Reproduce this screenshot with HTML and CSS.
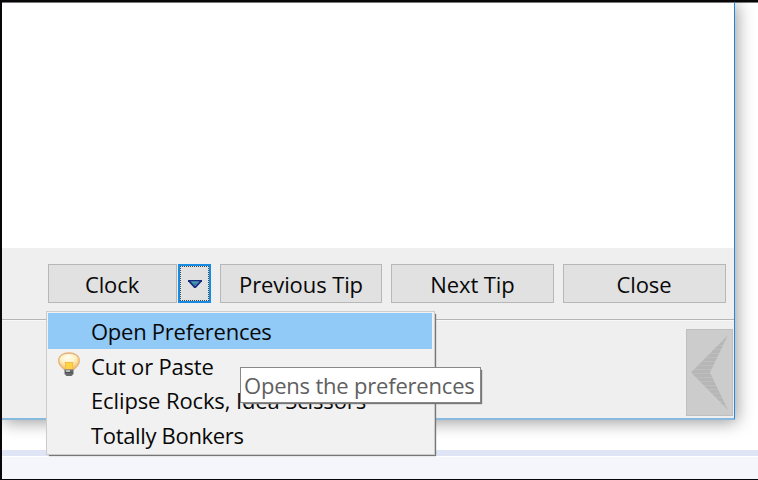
FILE: index.html
```html
<!DOCTYPE html>
<html lang="en">
<head>
<meta charset="utf-8">
<title>Tip of the Day</title>
<link rel="stylesheet" href="styles.css">
</head>
<body>
<main class="desktop">
  <section class="dialog">
    <div class="tip-area"></div>
    <div class="button-bar">
      <button class="button clock"><span>Clock</span></button>
      <button class="button dropdown" aria-label="More tips">
        <svg width="14" height="9" viewBox="0 0 14 9"><path d="M0 0H14V1.2L7.8 8H6.2L0 1.2Z" fill="#19297f"/><path d="M2.5 1.3H11.7L7 6.2Z" fill="#439bad"/><path d="M4.5 3.5H9.7L7 6.2Z" fill="#3478b5"/></svg>
      </button>
      <button class="button previous"><span>Previous Tip</span></button>
      <button class="button next"><span>Next Tip</span></button>
      <button class="button close"><span>Close</span></button>
    </div>
    <div class="footer">
      <div class="back">
        <svg width="47" height="87" viewBox="0 0 47 87">
          <defs><pattern id="lines" width="4" height="4" patternUnits="userSpaceOnUse"><path d="M0 0H4V4H0Z" fill="#b6b6b6"/><path d="M0 0H4V1H0Z" fill="#bebebe"/></pattern></defs>
          <path d="M42 6L5 43.500L42 81L24 43.500Z" fill="url(#lines)"/>
        </svg>
      </div>
    </div>
  </section>
  <div class="strip"></div>
  <nav class="menu">
    <div class="item selected"><span class="t1">Open Preferences</span></div>
    <div class="item">
      <svg class="bulb" width="24" height="26" viewBox="0 0 24 26">
        <defs><radialGradient id="glow" cx=".45" cy=".28" r=".65"><stop offset="0" stop-color="#fffef2"/><stop offset=".55" stop-color="#fff0c2"/><stop offset="1" stop-color="#f6c76e"/></radialGradient></defs>
        <path d="M7.500 17.500C6 15.500 1.700 14 1.700 8.500C1.700 4 6 1 12 1S22.300 4 22.300 8.500C22.300 14 18 15.500 16.500 17.500Z" fill="url(#glow)" stroke="#e5b27c" stroke-width="1.300"/>
        <path d="M8 10H16V17H8Z" fill="#ffd33f"/><path d="M7.500 10.500H16.500M8.500 11V17M15.500 11V17" stroke="#f0bd50" fill="none"/>
        <path d="M7.500 17.500H16.500V22L14.500 24H9.500L7.500 22Z" fill="#66686a"/><path d="M9 18H13V21H9Z" fill="#b8bbb9"/><path d="M8 20.500H16" stroke="#4e5154"/>
      </svg>
      <span class="t2">Cut or Paste</span>
    </div>
    <div class="item"><span class="t3">Eclipse Rocks, Idea Scissors</span></div>
    <div class="item"><span class="t4">Totally Bonkers</span></div>
  </nav>
  <div class="tooltip"><span>Opens the preferences</span></div>
</main>
</body>
</html>
```
FILE: styles.css
```css
* { box-sizing: border-box; }
body { margin: 0; font: 22px/30px "Open Sans", "Noto Sans", sans-serif; color: #080808; }
.desktop { position: relative; width: 758px; height: 480px; overflow: hidden; background: #fff; border: solid #080609; border-width: 2px 0 1px 2px; box-shadow: inset 0 1px #777; display: flex; flex-direction: column; }
.dialog { width: 733px; height: 418px; flex: none; border-right: 1px solid #2387d8; border-bottom: 2px solid #88b9df; background: #efefef; box-shadow: 2px 2px 16px #0006; }
.tip-area { height: 246px; background: #fff; border-top: 1px solid #777; }
.button-bar { height: 72px; padding: 16px 8px 0 46px; display: flex; border-bottom: 1px solid #b5b5b5; }
.button { height: 39px; padding: 0; border: 1px solid #b7b7b7; border-radius: 0; background: #e1e1e1; font: inherit; letter-spacing: -.1px; color: inherit; display: flex; align-items: center; justify-content: center; flex: none; }
.clock { width: 129px; }
.clock span, .close span { margin-right: 1px; }
.dropdown { width: 33px; margin-left: 1px; border: 2px solid #178be1; outline: 1px dotted #484848; outline-offset: -3px; }
.dropdown svg { position: relative; top: 1px; }
.previous { width: 162px; margin-left: 9px; }
.next { width: 163px; margin-left: 9px; }
.close { width: 163px; margin-left: 9px; }
.footer { height: 98px; display: flex; justify-content: flex-end; padding: 8px 1px 0 0; border-top: 1px solid #f8f8f8; }
.back { width: 47px; height: 87px; background: #ccc; border: 1px solid #bfbfbf; }
.back svg { display: block; margin: -1px; }
.strip { margin-top: 30px; height: 30px; flex: none; background: #f4f6fc; border-top: 6px solid #dfe5f5; box-shadow: inset 0 1px #fff; }
.menu { position: absolute; left: 44px; top: 309px; width: 389px; height: 144px; padding: 1px; border: 1px solid #ccc; background: #f1f1f1; box-shadow: 2px 2px 1px -1px #777; }
.item { position: relative; height: 34px; width: 384px; padding-left: 43px; white-space: nowrap; line-height: 34px; }
.selected { height: 36px; line-height: 36px; background: #91c9f7; }
.bulb { position: absolute; left: 9px; top: 3px; }
.t1 { letter-spacing: -.26px; }
.t2 { letter-spacing: -.2px; }
.t3 { letter-spacing: -.12px; }
.t4 { position: relative; top: 1px; letter-spacing: -.33px; }
.tooltip { position: absolute; left: 238px; top: 365px; width: 241px; height: 36px; padding: 1px 0 0 3px; border: 1px solid #888; background: #fff; box-shadow: 2px 2px 1px -1px #777; color: #606060; white-space: nowrap; line-height: 32px; letter-spacing: -.2px; }
```
